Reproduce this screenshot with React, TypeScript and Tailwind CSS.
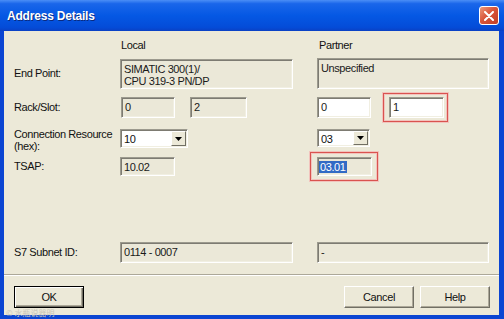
import { ReactNode } from "react";

const sunken =
  "border border-t-[#9c9a8e] border-l-[#9c9a8e] border-r-white border-b-white shadow-[inset_1px_1px_0_#7d7b72,inset_-1px_-1px_0_#f1efe2]";

// red annotation frame around a field
const mark = "border border-[#d9534f] shadow-[0_0_0_1px_#f2c3bd,inset_0_0_0_1px_#f2c3bd]";

function Field({
  className,
  white,
  children,
}: {
  className: string;
  white?: boolean;
  children?: ReactNode;
}) {
  return (
    <div
      className={`${sunken} ${white ? "bg-white" : "bg-[#ebe8d8]"} px-[3px] pt-[3px] leading-[12px] text-[#1a1a1a] ${className}`}
    >
      {children}
    </div>
  );
}

function Combo({ value, className }: { value: string; className: string }) {
  return (
    <div className={`${sunken} bg-white flex items-stretch ${className}`}>
      <span className="flex-1 pl-[3px] pt-[3px] leading-[12px]">{value}</span>
      <span className="w-[15px] my-[1px] mr-[1px] flex items-center justify-center bg-[#ece9d8] border border-t-white border-l-white border-r-[#716f64] border-b-[#716f64]">
        <svg width="7" height="4" viewBox="0 0 7 4">
          <path d="M0 0h7L3.5 4z" fill="#000" />
        </svg>
      </span>
    </div>
  );
}

function Button({ label, primary }: { label: string; primary?: boolean }) {
  return (
    <div
      className={`w-[70px] h-[22px] flex items-center justify-center bg-[#ece9d8] ${
        primary
          ? "border border-black shadow-[inset_1px_1px_0_#fff,inset_-1px_-1px_0_#716f64,inset_-2px_-2px_0_#aca899]"
          : "border border-t-white border-l-white border-r-[#716f64] border-b-[#716f64] shadow-[inset_-1px_-1px_0_#aca899]"
      }`}
    >
      {label}
    </div>
  );
}

export default function App() {
  return (
    <div className="w-[504px] h-[319px] flex flex-col bg-[#0b45d2] overflow-hidden">
      {/* title bar */}
      <div className="h-[31px] shrink-0 flex items-center justify-between pl-[7px] pr-[5px] bg-[linear-gradient(to_bottom,#4b8ef6_0%,#1a66ea_12%,#0558e4_50%,#044cd8_88%,#0a40c4_100%)]">
        <span className="text-white font-bold text-[12px] tracking-[-0.2px] font-['Liberation_Sans',Arial,sans-serif] [text-shadow:1px_1px_0_#0a2a80]">
          Address Details
        </span>
        <div className="w-[20px] h-[19px] rounded-[3px] border border-white bg-[linear-gradient(135deg,#ec9a7c,#d9553a_45%,#c23f26)] flex items-center justify-center">
          <svg width="10" height="10" viewBox="0 0 10 10">
            <path d="M1 1L9 9M9 1L1 9" stroke="#fff" strokeWidth="2" strokeLinecap="round" />
          </svg>
        </div>
      </div>

      {/* body */}
      <div className="relative flex-1 ml-[4px] mr-[5px] mb-[4px] bg-[#ece9d8] pl-[10px] flex flex-col text-[11px] tracking-[-0.4px] text-[#111] font-['Liberation_Sans',Arial,sans-serif]">
        <div className="mt-[8px] h-[12px] leading-[12px] flex">
          <div className="w-[106px]" />
          <div className="w-[197px] pl-[1px]">Local</div>
          <div className="pl-[2px]">Partner</div>
        </div>

        <div className="mt-[7px] flex items-center">
          <div className="w-[106px]">End Point:</div>
          <div className="w-[197px]">
            <Field className="w-[173px] h-[30px]">
              SIMATIC 300(1)/
              <br />
              CPU 319-3 PN/DP
            </Field>
          </div>
          <Field className="w-[172px] h-[31px]">Unspecified</Field>
        </div>

        <div className="mt-[8px] h-[21px] flex items-center">
          <div className="w-[106px]">Rack/Slot:</div>
          <div className="w-[197px] flex gap-[15px] pl-[1px]">
            <Field className="w-[54px] h-[21px]">0</Field>
            <Field className="w-[57px] h-[21px]">2</Field>
          </div>
          <div className="flex items-center">
            <Field white className="w-[54px] h-[21px]">0</Field>
            <div className={`ml-[12px] pl-[5px] pr-[3px] py-[3px] ${mark}`}>
              <Field white className="w-[55px] h-[21px]">1</Field>
            </div>
          </div>
        </div>

        <div className="mt-[11px] flex items-start">
          <div className="w-[106px] leading-[12px] -mt-[1px]">
            Connection Resource
            <br />
            (hex):
          </div>
          <div className="w-[197px]">
            <Combo value="10" className="w-[68px] h-[19px]" />
          </div>
          <Combo value="03" className="w-[53px] h-[18px]" />
        </div>

        <div className="mt-[5px] h-[19px] flex items-center">
          <div className="w-[106px]">TSAP:</div>
          <div className="w-[197px]">
            <Field className="w-[55px] h-[19px]">10.02</Field>
          </div>
          <div className={`-ml-[7px] pl-[6px] pr-[5px] py-[4px] ${mark}`}>
            <Field className="w-[55px] h-[19px] !pl-[1px]">
              <span className="bg-[#316ac5] text-white px-[1px]">03.01</span>
            </Field>
          </div>
        </div>

        <div className="mt-[66px] flex items-center">
          <div className="w-[106px]">S7 Subnet ID:</div>
          <div className="w-[197px]">
            <Field className="w-[173px] h-[21px]">0114 - 0007</Field>
          </div>
          <Field className="w-[172px] h-[21px]">-</Field>
        </div>

        <div className="mt-[11px] -ml-[10px] border-t border-t-[#aca899] border-b border-b-white" />

        <div className="mt-[10px] flex justify-between pr-[9px]">
          <Button label="OK" primary />
          <div className="flex gap-[6px]">
            <Button label="Cancel" />
            <Button label="Help" />
          </div>
        </div>

        <div className="absolute left-[2px] -bottom-[3px] text-[8px] leading-[10px] tracking-normal text-[#c9c6b8] font-['Noto_Sans_CJK_SC',sans-serif]">
          © 水瓶说器明
        </div>
      </div>
    </div>
  );
}
